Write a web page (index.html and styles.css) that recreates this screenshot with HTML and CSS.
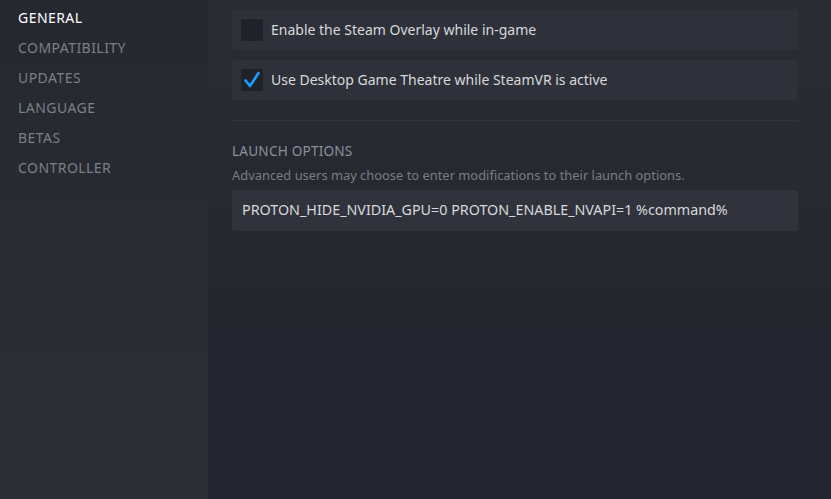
FILE: index.html
```html
<!DOCTYPE html>
<html>
<head>
<meta charset="utf-8">
<link rel="stylesheet" href="styles.css">
</head>
<body>
<div class="app">
  <nav class="sidebar">
    <div class="nav-item active">GENERAL</div>
    <div class="nav-item">COMPATIBILITY</div>
    <div class="nav-item">UPDATES</div>
    <div class="nav-item">LANGUAGE</div>
    <div class="nav-item">BETAS</div>
    <div class="nav-item">CONTROLLER</div>
  </nav>
  <main class="content">
    <div class="row">
      <span class="box"></span>
      <span class="label">Enable the Steam Overlay while in-game</span>
    </div>
    <div class="row">
      <span class="box checked">
        <svg viewBox="0 0 22 22" width="22" height="22"><path d="M4.5 11.5 L9 17 L17.5 4" fill="none" stroke="#1a9fff" stroke-width="2.6" stroke-linecap="round" stroke-linejoin="round"/></svg>
      </span>
      <span class="label">Use Desktop Game Theatre while SteamVR is active</span>
    </div>
    <div class="sep"></div>
    <div class="section-title">LAUNCH OPTIONS</div>
    <div class="desc">Advanced users may choose to enter modifications to their launch options.</div>
    <div class="input">PROTON_HIDE_NVIDIA_GPU=0 PROTON_ENABLE_NVAPI=1 %command%</div>
  </main>
</div>
</body>
</html>
```
FILE: styles.css
```css
html, body {
  margin: 0;
  padding: 0;
  height: 100%;
  background: #23262e;
  font-family: "Noto Sans", "Open Sans", sans-serif;
}
.app {
  display: flex;
  height: 499px;
}
.sidebar {
  width: 208px;
  flex: none;
  background: linear-gradient(180deg, #25282f 0%, #292c32 60%, #2b2e34 100%);
  padding-top: 6px;
  box-sizing: border-box;
}
.nav-item {
  height: 30px;
  line-height: 24px;
  padding-left: 18px;
  font-size: 14px;
  letter-spacing: 0.45px;
  color: #7b8088;
}
.nav-item.active {
  color: #ffffff;
}
.content {
  flex: 1;
  background: linear-gradient(180deg, #292c33 0%, #262930 40%, #23262e 65%, #23262e 100%);
  padding: 10px 33px 0 24px;
}
.row {
  display: flex;
  align-items: center;
  height: 40px;
  box-sizing: border-box;
  background: #2e3139;
  border-radius: 3px;
  padding-left: 9px;
  padding-bottom: 2px;
  margin-bottom: 10px;
}
.box {
  width: 22px;
  height: 22px;
  background: #1f2228;
  border-radius: 2px;
  margin-right: 8px;
  margin-top: 2px;
  display: flex;
}
.label {
  font-size: 14px;
  color: #d7d9dc;
}
.sep {
  height: 1px;
  background: #30333a;
  margin-top: 20px;
  margin-bottom: 20px;
}
.section-title {
  font-size: 13.6px;
  color: #8c9199;
  line-height: 20px;
  letter-spacing: 0.2px;
}
.desc {
  font-size: 12.9px;
  color: #787d85;
  line-height: 18px;
  margin-top: 5px;
}
.input {
  margin-top: 6px;
  height: 41px;
  box-sizing: border-box;
  background: #30333b;
  border-radius: 3px;
  padding-left: 10px;
  padding-bottom: 2px;
  display: flex;
  align-items: center;
  font-size: 14.3px;
  color: #d7d9dc;
}
```
